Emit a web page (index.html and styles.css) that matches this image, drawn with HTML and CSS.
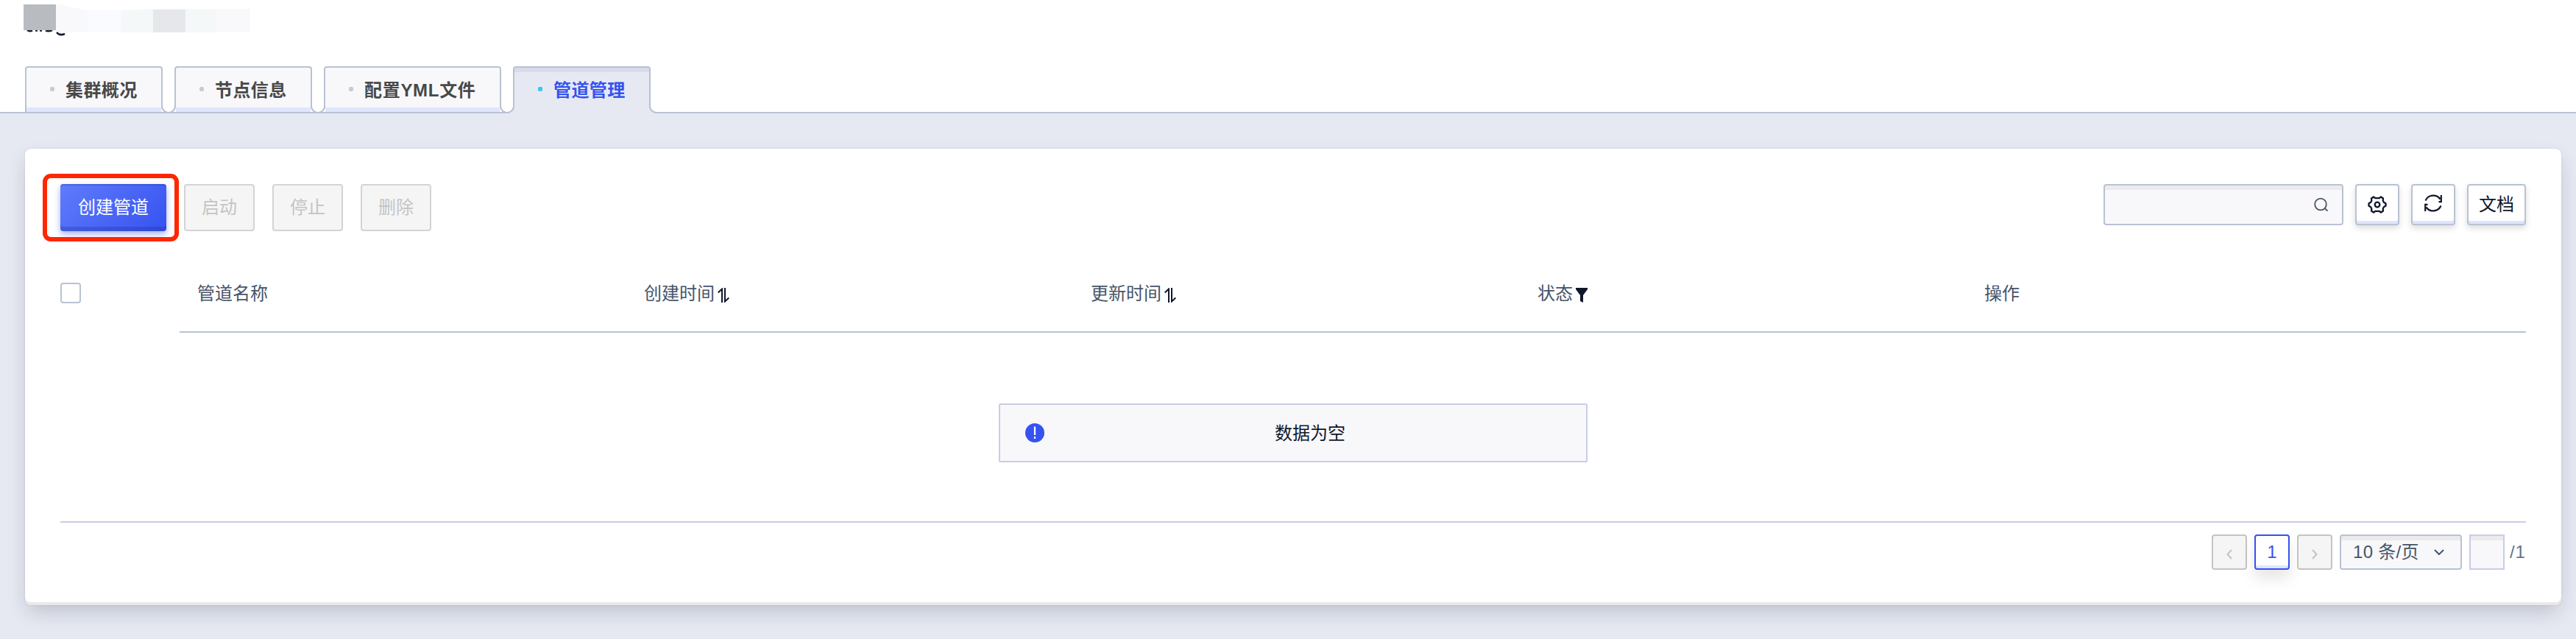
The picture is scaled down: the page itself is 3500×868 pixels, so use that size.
FILE: index.html
```html
<!DOCTYPE html>
<html lang="zh-CN">
<head>
<meta charset="utf-8">
<title>管道管理</title>
<link rel="stylesheet" href="styles.css">
</head>
<body>
<header class="top">
  <div class="cluster">
    <svg class="mask" width="312" height="46" viewBox="0 0 312 46">
      <path d="M44 1C62 1 74 9 97 9H132L170 7H309V39H44z" fill="#f9f9fc"/>
      <path d="M133 9L170 8H177V39H133z M221 8H263V39H221z" fill="#f4f8f9"/>
      <path d="M88 10H133V39H88z" fill="#f9fbff"/>
      <path d="M177 8H221V39H177z" fill="#e5e7eb"/>
      <path d="M6 36Q9 38 13 36.500M17 36.500h3M23 36.500h3M31 36.500Q35 38 40 36M46 39Q50 44 57 41" fill="none" stroke="#101a33" stroke-width="2.500"/>
      <path d="M1 1H45V36H1z" fill="#b8bbbf"/>
    </svg>
  </div>
  <nav class="tabs">
    <a class="tab"><i class="dot"></i><span>集群概况</span></a>
    <a class="tab"><i class="dot"></i><span>节点信息</span></a>
    <a class="tab wide"><i class="dot"></i><span>配置YML文件</span></a>
    <a class="tab active"><i class="dot"></i><span>管道管理</span></a>
  </nav>
</header>
<main class="card">
  <div class="toolbar">
    <div class="actions">
      <div class="primary-wrap"><button class="btn primary">创建管道</button></div>
      <button class="btn off">启动</button>
      <button class="btn off">停止</button>
      <button class="btn off">删除</button>
    </div>
    <div class="tools">
      <div class="search">
        <svg width="20" height="20" viewBox="0 0 20 20" fill="none" stroke="#475569" stroke-width="1.800"><circle cx="10" cy="9.500" r="7.800"/><path d="M15 14.500l4.500 4"/></svg>
      </div>
      <button class="tool">
        <svg width="26" height="26" viewBox="0 0 26 26" fill="none" stroke="#0f172a" stroke-width="2.300" stroke-linejoin="round"><path d="M8 2.500L10.500 4.200H15.500L18 2.500L21 4.500L20.700 7.500L22 10L24.500 11.300V14.700L22 16L20.700 18.500L21 21.500L18 23.500L15.500 21.800H10.500L8 23.500L5 21.500L5.300 18.500L4 16L1.500 14.700V11.300L4 10L5.300 7.500L5 4.500z"/><circle cx="13" cy="13" r="3.300"/></svg>
      </button>
      <button class="tool">
        <svg class="refresh" width="26" height="26" viewBox="0 0 26 26" fill="none" stroke="#0f172a" stroke-width="2.200"><path d="M2.500 9.500A11.500 11.500 0 0 1 22.500 7.500M23.800 2V11.200H20.500M23.500 16.500A11.500 11.500 0 0 1 3.500 18.500M2.200 24V14.800H5.500"/></svg>
      </button>
      <button class="tool doc">文档</button>
    </div>
  </div>
  <div class="table">
    <div class="check-cell"><span class="check"></span></div>
    <div class="head">
      <div class="th">管道名称</div>
      <div class="th">创建时间<svg width="16" height="20" viewBox="0 0 16 20" fill="none" stroke="#0f172a" stroke-width="2"><path d="M6 20V1.500L.7 6.500M10 0V18.500L15.300 13.500"/></svg></div>
      <div class="th">更新时间<svg width="16" height="20" viewBox="0 0 16 20" fill="none" stroke="#0f172a" stroke-width="2"><path d="M6 20V1.500L.7 6.500M10 0V18.500L15.300 13.500"/></svg></div>
      <div class="th">状态<svg width="16" height="20" viewBox="0 0 16 20" fill="#0f172a"><path d="M0 0H16V2L10 10V20L6 18V10L0 2z"/></svg></div>
      <div class="th">操作</div>
    </div>
  </div>
  <div class="body">
    <div class="empty">
      <svg width="26" height="26" viewBox="0 0 26 26"><circle cx="13" cy="13" r="13" fill="#3652f1"/><path d="M13 4.500V16M13 18V21" stroke="#fff" stroke-width="2.200"/></svg>
      <span>数据为空</span>
    </div>
  </div>
  <div class="pager">
    <button class="page off"><svg width="8" height="14" viewBox="0 0 8 14"><path d="M7 1L1.500 7L7 13" fill="none" stroke="#c4c4c4" stroke-width="2"/></svg></button>
    <button class="page current">1</button>
    <button class="page off"><svg width="8" height="14" viewBox="0 0 8 14"><path d="M1 1L6.500 7L1 13" fill="none" stroke="#c4c4c4" stroke-width="2"/></svg></button>
    <div class="size"><span>10 条/页</span><svg width="14" height="8" viewBox="0 0 14 8"><path d="M1 1L7 7L13 1" fill="none" stroke="#475569" stroke-width="2"/></svg></div>
    <div class="jump"></div>
    <span class="total">/1</span>
  </div>
</main>
</body>
</html>
```
FILE: styles.css
```css
* { box-sizing: border-box; }
body {
  margin: 0;
  height: 868px;
  overflow: hidden;
  background: #e6e9f2;
  font: 24px/36px "Liberation Sans", "Noto Sans CJK SC", sans-serif;
  color: #0f172a;
}
button { font: inherit; padding: 0; margin: 0; }
svg { display: block; flex: none; }
.top {
  height: 154px;
  background: #fff;
  border-bottom: 2px solid #b9c2d3;
}
.cluster { height: 90px; padding: 5px 0 0 31px; }
.tabs { display: flex; gap: 16px; padding-left: 34px; }
.tab {
  --foot: #fff;
  position: relative;
  display: flex;
  align-items: center;
  width: 187px;
  height: 62px;
  padding: 2px 0 0 32px;
  border: 2px solid #b9c2d3;
  border-bottom: 0;
  border-radius: 4px 4px 0 0;
  background: #f8f8fb;
  box-shadow: inset 0 -6px #dfe5fd;
  font-weight: 700;
  letter-spacing: .4px;
  white-space: nowrap;
  color: #484848;
}
.tab.wide { width: 241px; letter-spacing: .7px; }
.dot {
  width: 6px;
  height: 6px;
  margin: -4px 15px 0 0;
  border-radius: 2px;
  background: #c9cbd0;
}
/* flared feet joining each tab to the rule below */
.tab::before, .tab::after {
  content: "";
  position: absolute;
  bottom: 0;
  width: 10px;
  height: 8px;
}
.tab::before {
  left: -10px;
  background: radial-gradient(circle at 0 0, #fff 7.5px, #b9c2d3 8.2px 9.700px, var(--foot) 10.300px);
}
.tab::after {
  right: -10px;
  background: radial-gradient(circle at 100% 0, #fff 7.5px, #b9c2d3 8.2px 9.700px, var(--foot) 10.300px);
}
.tab:first-child::before { display: none; }
.tab.active {
  --foot: #e6e9f2;
  height: 64px;
  margin-bottom: -2px;
  padding-bottom: 2px;
  background: #e6e9f2;
  box-shadow: inset 0 6px #d9dbeb;
  color: #3652f1;
}
.tab.active::before, .tab.active::after { height: 10px; }
.tab.active .dot { background: #38c6f4; }
.card {
  width: 3446px;
  height: 620px;
  margin: 48px 0 0 34px;
  padding: 48px 48px 0;
  border-radius: 8px;
  background: #fff;
  box-shadow: inset 0 -4px #e9e9e9, 0 0 2px rgba(15, 23, 42, .16), 0 12px 28px -4px rgba(15, 23, 42, .2);
}
.toolbar { display: flex; justify-content: space-between; height: 64px; }
.actions { display: flex; gap: 24px; }
.primary-wrap { position: relative; }
.primary-wrap::after {
  content: "";
  position: absolute;
  inset: -14px -17px -14px -24px;
  border: 6px solid #ff2600;
  border-radius: 11px;
}
.btn { width: 96px; height: 64px; border-radius: 4px; }
.btn.primary {
  display: block;
  width: 144px;
  border: 0;
  color: #fff;
  background: linear-gradient(135deg, #5f7cfb, #3652f1);
  box-shadow: inset 0 2px rgba(30, 50, 150, .3), inset 0 -6px rgba(30, 50, 150, .3), 0 4px 8px rgba(54, 82, 241, .45);
}
.btn.off { border: 2px solid #d4d4d4; background: #f5f5f5; color: #c4c4c4; }
.tools { display: flex; gap: 16px; }
.search {
  display: flex;
  align-items: center;
  justify-content: flex-end;
  width: 326px;
  height: 56px;
  padding-right: 19px;
  border: 2px solid #b9c2d3;
  border-radius: 4px;
  background: #f8f8fb;
  box-shadow: inset 0 6px #ebebee;
}
.tool {
  display: flex;
  align-items: center;
  justify-content: center;
  width: 60px;
  height: 56px;
  border: 2px solid #b9c2d3;
  border-radius: 4px;
  background: #fff;
  color: #0f172a;
  box-shadow: inset 0 -4px #dfe5fd, 0 4px 8px rgba(0, 0, 0, .14);
}
.tool.doc { width: 80px; }
.refresh { margin-top: -5px; }
.table { display: flex; height: 138px; }
.check-cell { width: 162px; padding-top: 70px; }
.check { display: block; width: 28px; height: 28px; border: 2px solid #b9c2d3; border-radius: 4px; }
.head { display: flex; flex: 1; border-bottom: 2px solid #b9c2d3; padding: 67px 0 0 24px; color: #475569; }
.th { display: flex; height: 36px; width: 607px; }
.th:last-child { width: auto; }
.th svg { margin: 10px 0 0 4px; }
.body { display: flex; justify-content: center; padding-top: 96px; height: 258px; border-bottom: 2px solid #c9cde6; }
.empty {
  display: flex;
  align-items: center;
  width: 800px;
  height: 80px;
  padding: 0 14px 0 34px;
  border: 2px solid #c9cde6;
  border-radius: 2px;
  background: #f8f8fb;
}
.empty span { flex: 1; padding-top: 2px; text-align: center; }
.pager { display: flex; justify-content: flex-end; gap: 10px; padding-top: 16px; }
.page {
  display: flex;
  align-items: center;
  justify-content: center;
  width: 48px;
  height: 48px;
  border-radius: 4px;
}
.page.off { border: 2px solid #c4c4c4; background: #f5f5f5; padding-top: 5px; }
.page.current {
  border: 2px solid #3652f1;
  background: #fff;
  color: #3652f1;
  box-shadow: inset 0 -4px #dfe5fd, 0 12px 20px rgba(0, 0, 0, .1);
}
.size {
  display: flex;
  align-items: center;
  justify-content: space-between;
  width: 166px;
  height: 48px;
  padding: 0 22px 0 16px;
  border: 2px solid #b9c2d3;
  border-radius: 4px;
  background: #f8f8fb;
  box-shadow: inset 0 6px #ebebee;
  letter-spacing: .3px;
  color: #475569;
}
.jump { width: 48px; height: 48px; border: 2px solid #c9cde6; background: #f8f8fb; box-shadow: inset 0 6px #ebebee; }
.total { width: 22px; margin-left: -3px; line-height: 48px; letter-spacing: .8px; color: #64748b; }
```
